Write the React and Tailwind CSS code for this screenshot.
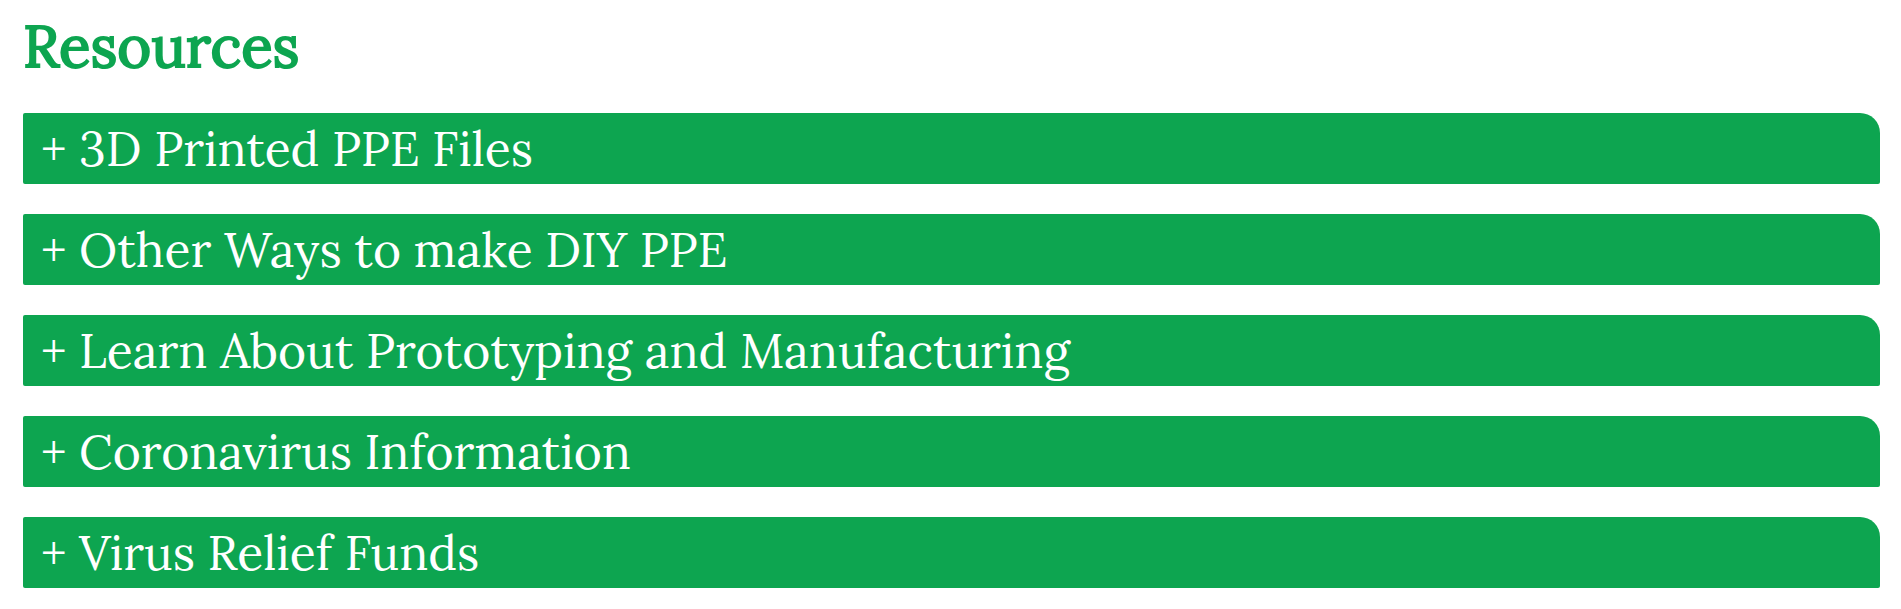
const sections = [
  "3D Printed PPE Files",
  "Other Ways to make DIY PPE",
  "Learn About Prototyping and Manufacturing",
  "Coronavirus Information",
  "Virus Relief Funds",
];

export default function App() {
  return (
    <main className="bg-white pt-[11px] pr-[21px] pb-5 pl-[23px] font-['Lora','Liberation_Serif',serif]">
      <h1 className="text-[58px] leading-[70px] font-normal text-[#0da550] [-webkit-text-stroke:2px_#0da550]">Resources</h1>
      <div className="mt-8 flex flex-col gap-[30px]">
        {sections.map((title) => (
          <button
            key={title}
            type="button"
            aria-expanded="false"
            className="block w-full rounded-[2px] rounded-tr-[20px] bg-[#0da550] px-[18px] pt-[6px] pb-[5px] text-left text-[48px] leading-[60px] text-white"
          >
            + {title}
          </button>
        ))}
      </div>
    </main>
  );
}
